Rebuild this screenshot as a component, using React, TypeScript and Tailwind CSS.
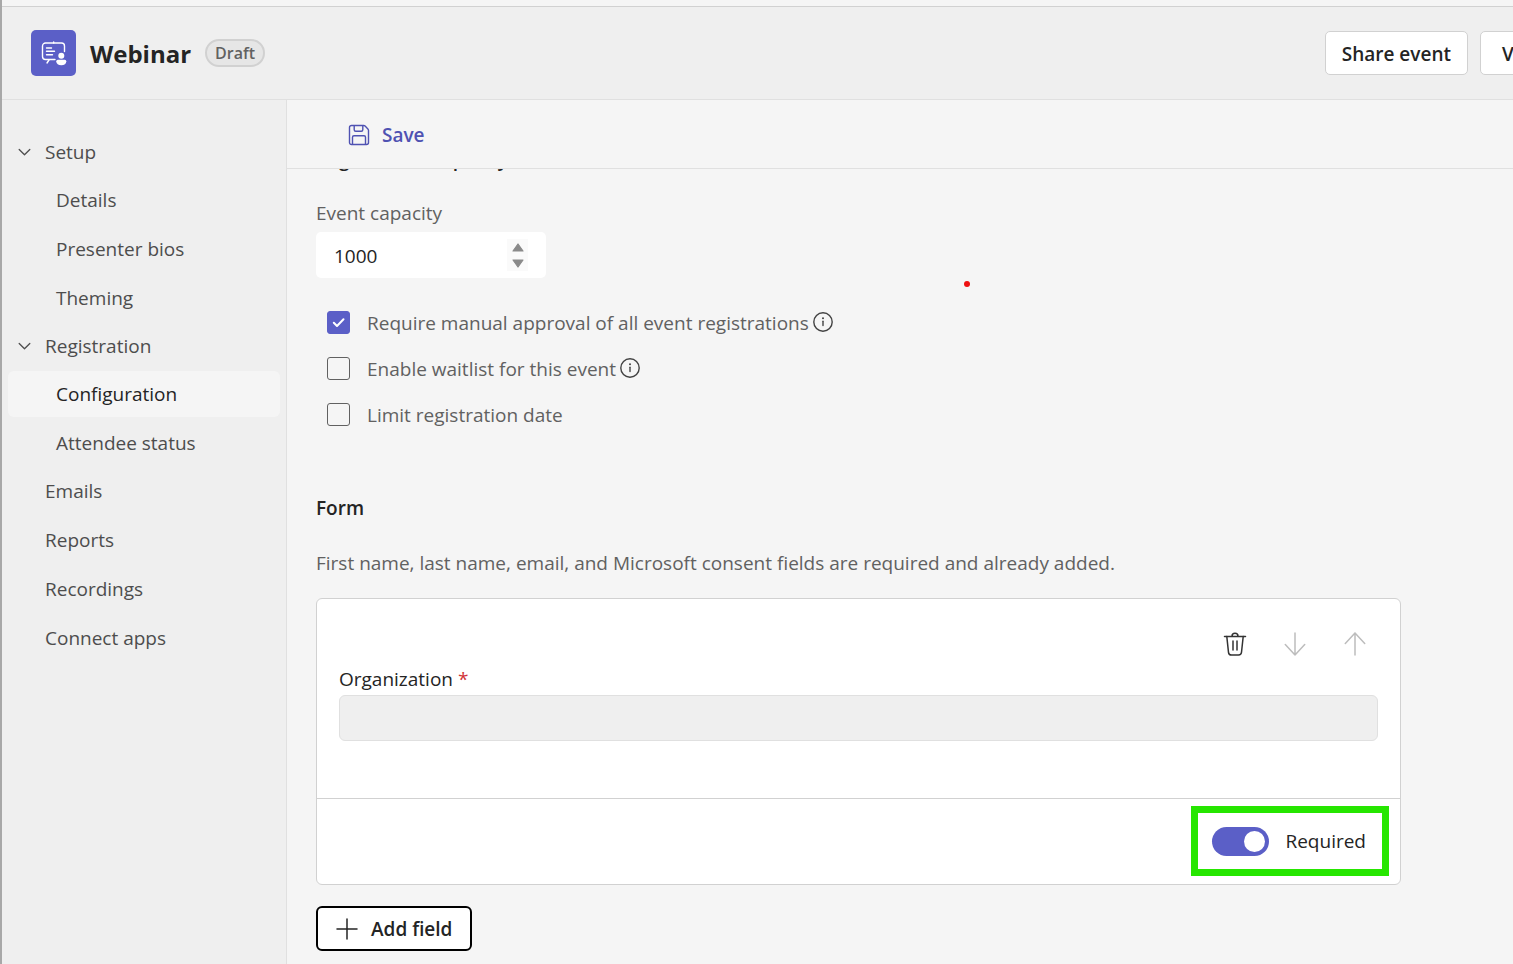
import { useState, type ReactNode } from 'react'

const SETUP_LINKS = ['Details', 'Presenter bios', 'Theming']
const REGISTRATION_LINKS = ['Configuration', 'Attendee status']
const OTHER_LINKS = ['Emails', 'Reports', 'Recordings', 'Connect apps']

const btnCls = 'flex shrink-0 items-center rounded-[5px] border border-[#d1d1d1] bg-white pt-0.5 font-semibold text-[#242424] whitespace-nowrap'
const iconBtnCls = 'flex size-9 items-center justify-center'

function WebinarIcon() {
  return (
    <svg width="26" height="26" viewBox="0 0 26 26" fill="none" stroke="#fff" strokeWidth="1.4" strokeLinecap="round" strokeLinejoin="round" aria-hidden="true">
      <path d="M14 19.500H4.500A3 3 0 0 1 1.500 16.500V6A3 3 0 0 1 4.500 3H20.500A3 3 0 0 1 23.500 6V11.500" />
      <path d="M12.700 2v1M8 20l-2 3M5.500 8h5M5.500 11.300h8M5.500 14.700h6" />
      <circle cx="20.300" cy="15.700" r="3" fill="#fff" stroke="none" />
      <path d="M16.800 19.700h7a1.500 1.500 0 0 1 1.500 1.500c0 2.600-2 4-5 4s-5-1.400-5-4a1.500 1.500 0 0 1 1.500-1.500z" fill="#fff" stroke="none" />
    </svg>
  )
}

function SaveIcon() {
  return (
    <svg width="22" height="22" viewBox="0 0 22 22" fill="none" stroke="currentColor" strokeWidth="1.4" strokeLinejoin="round" aria-hidden="true">
      <path d="M3.500 1.500h12.200c.5 0 1 .2 1.400.6l2.800 2.800c.4.400.6.900.6 1.400v12.200a2 2 0 0 1-2 2h-15a2 2 0 0 1-2-2v-15a2 2 0 0 1 2-2z" />
      <path d="M6.200 1.500v4.300c0 .9.600 1.500 1.500 1.500h5.600c.9 0 1.500-.6 1.500-1.500V1.500" />
      <path d="M4.500 20.500v-7.200c0-.9.600-1.500 1.500-1.500h10c.9 0 1.500.6 1.500 1.500v7.200" />
    </svg>
  )
}

function InfoIcon() {
  return (
    <svg width="20" height="20" viewBox="0 0 20 20" fill="none" stroke="#424242" strokeWidth="1.400" strokeLinecap="round" aria-hidden="true">
      <circle cx="10" cy="10" r="9.200" />
      <path d="M10 9.200v4.300" />
      <circle cx="10" cy="6.300" r="1" fill="#424242" stroke="none" />
    </svg>
  )
}

function TrashIcon() {
  return (
    <svg width="24" height="26" viewBox="0 0 24 26" fill="none" stroke="#333" strokeWidth="1.500" strokeLinecap="round" strokeLinejoin="round" aria-hidden="true">
      <path d="M1.500 5.500h21M9 5.200a3 3 0 0 1 6 0" />
      <path d="M3.800 5.500 5.500 21.300a3 3 0 0 0 3 2.700h7a3 3 0 0 0 3-2.700L20.200 5.500" />
      <path d="M10 10v9M14 10v9" />
    </svg>
  )
}

function ArrowIcon({ up = false }: { up?: boolean }) {
  return (
    <svg width="22" height="24" viewBox="0 0 22 24" fill="none" stroke="#bdbdbd" strokeWidth="1.500" strokeLinecap="round" strokeLinejoin="round" aria-hidden="true">
      <path d={up ? 'M11 23V1M1.300 11.500 11 1l9.700 10.500' : 'M11 1v22M1.300 12.500 11 23l9.700-10.500'} />
    </svg>
  )
}

function NavGroup({ title, links, current }: { title: string; links: string[]; current?: string }) {
  return (
    <li>
      <button className="flex h-[46px] w-full items-center gap-[14px] pl-[9px] text-left text-[#4d4d4d]">
        <svg width="14" height="8" viewBox="0 0 14 8" fill="none" stroke="#4d4d4d" strokeWidth="1.300" strokeLinecap="round" strokeLinejoin="round" aria-hidden="true">
          <path d="M2.200 1.500 7.500 6.700l5.300-5.200" />
        </svg>
        {title}
      </button>
      <ul className="flex flex-col gap-[3px] pt-0.5 pb-px">
        {links.map((l) => (
          <li key={l}>
            <a href="#" aria-current={l === current ? 'page' : undefined}
              className={`flex h-[46px] items-center rounded-md pl-12 ${l === current ? 'bg-[#f5f5f5] text-[#242424]' : 'text-[#4d4d4d]'}`}>
              {l}
            </a>
          </li>
        ))}
      </ul>
    </li>
  )
}

function CheckRow({ id, label, initial = false, info = false }: { id: string; label: string; initial?: boolean; info?: boolean }) {
  const [checked, setChecked] = useState(initial)
  return (
    <div className="flex h-[46px] items-center pl-[11px]">
      <span className="relative flex size-[23px] shrink-0">
        <input id={id} type="checkbox" checked={checked} onChange={(e) => setChecked(e.target.checked)}
          className="size-[23px] appearance-none rounded-[3px] border border-[#616161] checked:border-[#5b5fc7] checked:bg-[#5b5fc7]" />
        {checked && (
          <svg className="pointer-events-none absolute inset-0" width="23" height="23" viewBox="0 0 23 23" fill="none" stroke="#fff" strokeWidth="2" strokeLinecap="round" strokeLinejoin="round" aria-hidden="true">
            <path d="m6.800 11.800 3.200 3.200 6.500-6.700" />
          </svg>
        )}
      </span>
      <label htmlFor={id} className="pt-0.5 pl-[17px] text-[#616161]">{label}</label>
      {info && <button aria-label="More information" className="ml-1"><InfoIcon /></button>}
    </div>
  )
}

function StepButton({ label, onClick, children }: { label: string; onClick: () => void; children: ReactNode }) {
  return (
    <button aria-label={label} onClick={onClick} className="flex h-4 w-[21px] items-center justify-center">
      <svg width="12" height="9" viewBox="0 0 12 9" fill="#8a8a8a" stroke="#8a8a8a" strokeWidth="1.200" strokeLinejoin="round" aria-hidden="true">{children}</svg>
    </button>
  )
}

export default function App() {
  const [capacity, setCapacity] = useState(1000)
  const [required, setRequired] = useState(true)

  return (
    <div className="flex min-h-screen flex-col overflow-hidden border-l-2 border-[#a8a8a8] bg-[#f5f5f5] font-['Open_Sans','Noto_Sans',sans-serif] text-[19px] leading-7 text-[#242424]">
      <div className="h-[7px] border-b border-[#d1d1d1]" />

      {/* Header */}
      <header className="flex h-[93px] items-center overflow-hidden border-b border-[#e0e0e0] bg-[#efefef] pl-[29px]">
        <div className="flex h-[46px] w-[45px] shrink-0 items-center justify-center rounded-[5px] bg-[#5b5fc7]">
          <WebinarIcon />
        </div>
        <h1 className="ml-[14px] pt-0.5 text-2xl font-bold">Webinar</h1>
        <span className="ml-[14px] flex h-7 items-center rounded-full border-2 border-[#d1d1d1] bg-[#e6e6e6] px-2 text-base font-semibold text-[#616161]">Draft</span>
        <div className="-mr-[101px] ml-auto flex gap-3">
          <button className={`${btnCls} h-11 px-4`}>Share event</button>
          <button className={`${btnCls} h-11 w-[134px] pl-[21px]`}>View event</button>
        </div>
      </header>

      <div className="flex flex-1">
        {/* Sidebar */}
        <nav className="w-[285px] shrink-0 border-r border-[#e0e0e0] bg-[#efefef] px-1.5 pt-[29px]">
          <ul className="flex flex-col gap-px">
            <NavGroup title="Setup" links={SETUP_LINKS} />
            <NavGroup title="Registration" links={REGISTRATION_LINKS} current="Configuration" />
            {OTHER_LINKS.map((l) => (
              <li key={l} className="pb-0.5">
                <a href="#" className="flex h-[46px] items-center pl-[37px] text-[#4d4d4d]">{l}</a>
              </li>
            ))}
          </ul>
        </nav>

        <main className="flex min-w-0 flex-1 flex-col">
          <div className="flex h-[69px] items-center border-b border-[#e0e0e0] pt-px pl-[61px]">
            <button className="flex items-center gap-3 font-semibold text-[#4f52b2]">
              <SaveIcon />
              Save
            </button>
          </div>

          <div className="relative flex-1 overflow-hidden pr-28 pb-3 pl-[29px]">
            <h2 className="-mt-6 font-semibold">Registration capacity</h2>

            <label htmlFor="capacity" className="mt-[26px] block text-[#616161]">Event capacity</label>
            <div className="mt-[5px] flex h-[46px] w-[230px] items-center rounded-[5px] bg-white px-[18px]">
              <input id="capacity" type="number" value={capacity} onChange={(e) => setCapacity(Number(e.target.value))}
                className="min-w-0 flex-1 pt-0.5 [appearance:textfield] outline-none [&::-webkit-inner-spin-button]:appearance-none" />
              <div className="flex flex-col bg-[#fafafa]">
                <StepButton label="Increase" onClick={() => setCapacity(capacity + 1)}>
                  <path d="M6 1 11 8H1z" />
                </StepButton>
                <StepButton label="Decrease" onClick={() => setCapacity(capacity - 1)}>
                  <path d="M6 8 1 1h10z" />
                </StepButton>
              </div>
            </div>

            <div className="mt-[21px]">
              <CheckRow id="approval" label="Require manual approval of all event registrations" initial info />
              <CheckRow id="waitlist" label="Enable waitlist for this event" info />
              <CheckRow id="limit" label="Limit registration date" />
            </div>

            <span className="absolute top-[112px] left-[677px] size-1.5 rounded-full bg-[#ee1111]" />

            {/* Form */}
            <h2 className="mt-[57px] font-semibold">Form</h2>
            <p className="mt-[27px] text-[#616161]">First name, last name, email, and Microsoft consent fields are required and already added.</p>

            <section className="mt-[21px] rounded-[6px] border border-[#d1d1d1] bg-white">
              <div className="px-[22px] pt-[27px] pb-[57px]">
                <div className="flex justify-end gap-6 pr-[5px]">
                  <button aria-label="Delete field" className={iconBtnCls}><TrashIcon /></button>
                  <button aria-label="Move down" disabled className={iconBtnCls}><ArrowIcon /></button>
                  <button aria-label="Move up" disabled className={iconBtnCls}><ArrowIcon up /></button>
                </div>
                <label htmlFor="organization" className="mt-[3px] block">
                  Organization <span className="text-[#d13438]">*</span>
                </label>
                <input id="organization" type="text" disabled className="mt-0.5 block h-[46px] w-full rounded-[6px] border border-[#e0e0e0] bg-[#efefef] px-4" />
              </div>
              <div className="flex justify-end border-t border-[#d1d1d1] pt-[7px] pr-[11px] pb-2">
                <label className="flex h-[70px] items-center gap-4 border-7 border-[#26e600] pr-4 pl-[14px]">
                  <input type="checkbox" role="switch" checked={required} onChange={(e) => setRequired(e.target.checked)}
                    className="flex h-[29px] w-[57px] appearance-none items-center rounded-full bg-[#8a8a8a] px-1 before:size-[21px] before:rounded-full before:bg-white checked:justify-end checked:bg-[#5b5fc7]" />
                  Required
                </label>
              </div>
            </section>

            <button className="mt-[21px] flex h-[45px] items-center gap-[13px] rounded-[6px] border-2 border-black bg-white px-[18px] font-semibold">
              <svg width="22" height="22" viewBox="0 0 22 22" fill="none" stroke="#242424" strokeWidth="1.500" strokeLinecap="round" aria-hidden="true">
                <path d="M11 1v20M1 11h20" />
              </svg>
              Add field
            </button>
          </div>
        </main>
      </div>
    </div>
  )
}
